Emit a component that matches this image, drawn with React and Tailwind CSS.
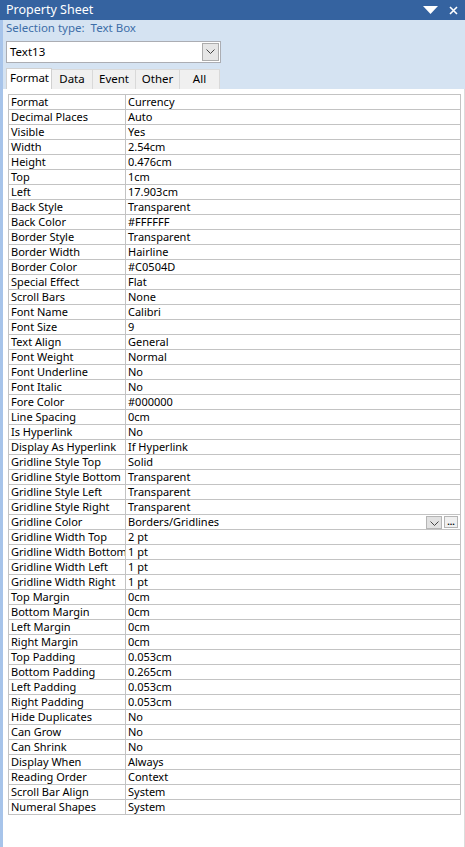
import React from 'react';

const rows = [
  ['Format', 'Currency'],
  ['Decimal Places', 'Auto'],
  ['Visible', 'Yes'],
  ['Width', '2.54cm'],
  ['Height', '0.476cm'],
  ['Top', '1cm'],
  ['Left', '17.903cm'],
  ['Back Style', 'Transparent'],
  ['Back Color', '#FFFFFF'],
  ['Border Style', 'Transparent'],
  ['Border Width', 'Hairline'],
  ['Border Color', '#C0504D'],
  ['Special Effect', 'Flat'],
  ['Scroll Bars', 'None'],
  ['Font Name', 'Calibri'],
  ['Font Size', '9'],
  ['Text Align', 'General'],
  ['Font Weight', 'Normal'],
  ['Font Underline', 'No'],
  ['Font Italic', 'No'],
  ['Fore Color', '#000000'],
  ['Line Spacing', '0cm'],
  ['Is Hyperlink', 'No'],
  ['Display As Hyperlink', 'If Hyperlink'],
  ['Gridline Style Top', 'Solid'],
  ['Gridline Style Bottom', 'Transparent'],
  ['Gridline Style Left', 'Transparent'],
  ['Gridline Style Right', 'Transparent'],
  ['Gridline Color', 'Borders/Gridlines', true],
  ['Gridline Width Top', '2 pt'],
  ['Gridline Width Bottom', '1 pt'],
  ['Gridline Width Left', '1 pt'],
  ['Gridline Width Right', '1 pt'],
  ['Top Margin', '0cm'],
  ['Bottom Margin', '0cm'],
  ['Left Margin', '0cm'],
  ['Right Margin', '0cm'],
  ['Top Padding', '0.053cm'],
  ['Bottom Padding', '0.265cm'],
  ['Left Padding', '0.053cm'],
  ['Right Padding', '0.053cm'],
  ['Hide Duplicates', 'No'],
  ['Can Grow', 'No'],
  ['Can Shrink', 'No'],
  ['Display When', 'Always'],
  ['Reading Order', 'Context'],
  ['Scroll Bar Align', 'System'],
  ['Numeral Shapes', 'System'],
];

const tabs = ['Data', 'Event', 'Other', 'All'];
const tabWidths = ['w-[41px]', 'w-[43px]', 'w-[44px]', 'w-[40px]'];

const Chevron = () => (
  <svg width="9" height="6" viewBox="0 0 9 6" className="text-[#444]">
    <path d="M0.5 0.5 L4.5 4.5 L8.5 0.5" fill="none" stroke="currentColor" strokeWidth="1" />
  </svg>
);

const PropertyRow = ({ name, value, picker }) => (
  <div className="flex h-[15px] border-b border-[#c3c3c3]">
    <div className="w-[117px] shrink-0 overflow-hidden whitespace-nowrap border-r border-[#c3c3c3] pl-[2px] leading-[14px]">
      {name}
    </div>
    <div className="flex flex-1 items-center pl-[2px] leading-[14px]">
      <span className="flex-1 whitespace-nowrap">{value}</span>
      {picker && (
        <div className="mr-[2px] flex items-center gap-[2px]">
          <div className="flex h-[13px] w-[16px] items-end justify-center border border-[#b5b5b5] bg-[#e1e1e1] pb-[1px]">
            <Chevron />
          </div>
          <div className="flex h-[12px] w-[14px] items-center justify-center border border-[#b5b5b5] bg-[#f0f0f0] text-[9px] font-bold leading-[6px]">
            ...
          </div>
        </div>
      )}
    </div>
  </div>
);

export default function App() {
  return (
    <div className="flex h-[847px] w-[465px] flex-col overflow-hidden bg-white font-['Noto_Sans',sans-serif] text-[11px] text-black">
      <div className="flex h-[20px] shrink-0 items-center bg-[#3563a0] pl-[6px] pr-[7px] text-white">
        <span className="flex-1 text-[12.5px] leading-none">Property Sheet</span>
        <svg width="15" height="8" viewBox="0 0 15 8" className="mr-[11px]">
          <path d="M0 0 H15 L7.5 8 Z" fill="#fff" />
        </svg>
        <svg width="9" height="9" viewBox="0 0 9 9">
          <path d="M1 1 L8 8 M8 1 L1 8" stroke="#fff" strokeWidth="1.6" />
        </svg>
      </div>

      <div className="flex flex-1">
        <div className="w-[3px] shrink-0 bg-[#a7c4ea]" />
        <div className="flex flex-1 flex-col">
          <div className="shrink-0 bg-[#d5e3f2] pl-[3px] pr-[3px]">
            <div className="pt-0 text-[11.5px] leading-[15px] text-[#3d6ea8]">Selection type:&nbsp; Text Box</div>
            <div className="mt-[6px] flex h-[22px] w-[215px] items-center border border-[#abadb3] bg-white pl-[3px] pr-[1px] text-[11.5px]">
              <span className="flex-1">Text13</span>
              <div className="flex h-[18px] w-[17px] items-center justify-center border border-[#acacac] bg-[#e6e6e6]">
                <Chevron />
              </div>
            </div>
            <div className="mt-[5px] flex h-[21px] items-end text-[11.5px]">
              <div className="flex h-[21px] w-[46px] items-center justify-center border border-b-0 border-[#d0d0d0] bg-white pb-[2px] pl-[1px]">
                Format
              </div>
              {tabs.map((t, i) => (
                <div
                  key={t}
                  className={`flex h-[20px] ${tabWidths[i]} items-center justify-center border-r border-t border-[#d9d9d9] bg-[#f0f0f0] pb-[1px]`}
                >
                  {t}
                </div>
              ))}
            </div>
          </div>

          <div className="flex flex-1 border-r border-[#dcdcdc] bg-white pl-[5px] pr-[1px] pt-[5px]">
            <div className="w-[453px]">
              <div className="border-l border-r border-t border-[#c3c3c3]">
                {rows.map(([name, value, picker]) => (
                  <PropertyRow key={name} name={name} value={value} picker={picker} />
                ))}
              </div>
            </div>
          </div>
        </div>
      </div>
    </div>
  );
}
